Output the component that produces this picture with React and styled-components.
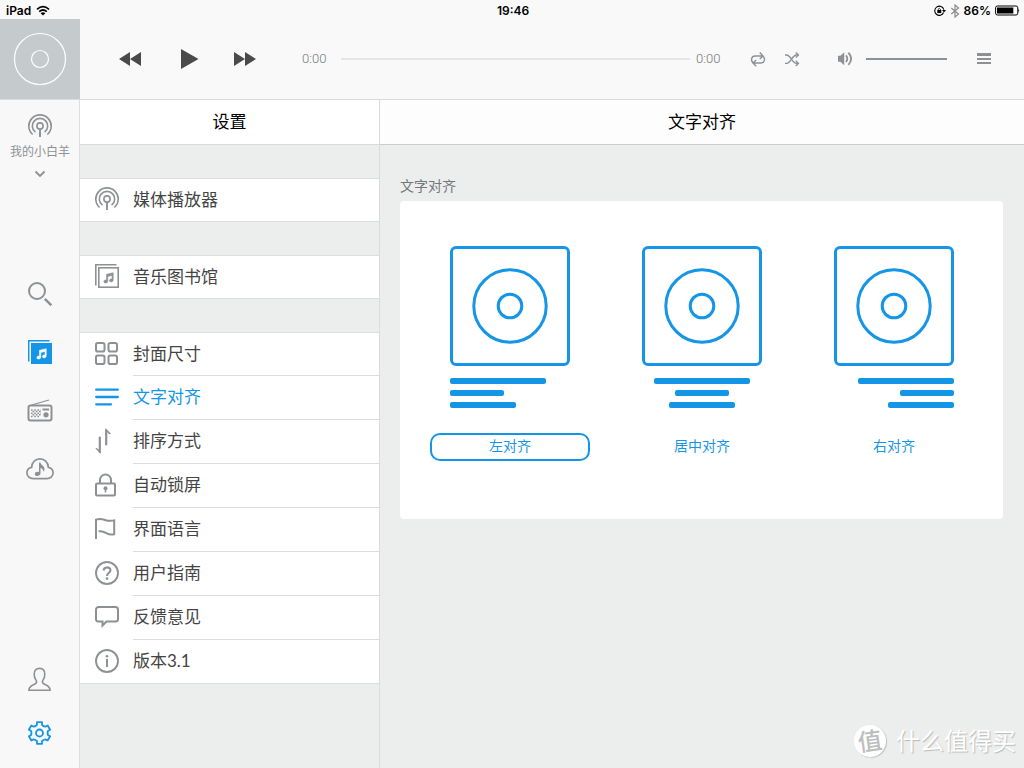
import React, { useState } from "react";
import styled, { createGlobalStyle, css } from "styled-components";

const BLUE = "#1495e5";
const GREY = "#8e9194";

const GlobalStyle = createGlobalStyle`
  *, *::before, *::after { box-sizing: border-box; }
  body {
    margin: 0;
    font-family: Lato, "Noto Sans CJK SC", sans-serif;
    background: #eceeee;
    color: #444;
  }
  button, input { font: inherit; color: inherit; }
  h1, h2, ul { margin: 0; padding: 0; font-weight: 400; }
  svg { display: block; flex: none; }
`;

const Page = styled.div`
  min-height: 100vh;
  display: flex;
  flex-direction: column;
  position: relative;
`;

const StatusBar = styled.div`
  display: grid;
  grid-template-columns: 1fr auto 1fr;
  align-items: center;
  height: 19px;
  padding: 2px 4px 0 6px;
  background: #f9f9f9;
  color: #000;
  font-family: Inter, sans-serif;
  font-size: 12px;
  font-weight: 600;
  line-height: 16px;
`;

const StatusGroup = styled.div`
  display: flex;
  align-items: center;
  gap: ${(p) => (p.$end ? 4 : 5)}px;
  justify-content: ${(p) => (p.$end ? "flex-end" : "flex-start")};
`;

const PlayerBar = styled.header`
  display: flex;
  align-items: center;
  height: 81px;
  padding-right: 32px;
  background: #f9f9f9;
  border-bottom: 1px solid #d9dbdc;
`;

const Cover = styled.div`
  width: 80px;
  height: 80px;
  flex: none;
  background: #c5cacd;
  color: #fff;
`;

const IconButton = styled.button`
  display: flex;
  align-items: center;
  justify-content: center;
  padding: 0;
  border: 0;
  background: none;
  cursor: pointer;
  color: ${GREY};
`;

const Transport = styled.div`
  display: flex;
  gap: 34px;
  padding-left: 38px;
  ${IconButton} { color: #4a4a4a; }
`;

const Progress = styled.div`
  flex: 1;
  display: flex;
  align-items: center;
  margin-left: 44px;
  min-width: 0;
`;

const Time = styled.span`
  width: 26px;
  font-family: Roboto, sans-serif;
  font-size: 13px;
  font-weight: 300;
  line-height: 16px;
  color: #77797b;
`;

const Slider = styled.input`
  appearance: none;
  height: 2px;
  margin: 0;
  padding: 0;
  min-width: 0;
  background: ${(p) => p.$color};
  ${(p) => (p.$wide ? css`flex: 1; margin: 0 6px 0 13px;` : css`width: 81px;`)}
  &::-webkit-slider-thumb { appearance: none; width: 0; height: 0; }
`;

const Modes = styled.div`
  display: flex;
  gap: 18px;
  margin: 0 36px 0 28px;
`;

const Volume = styled.label`
  display: flex;
  align-items: center;
  gap: 14px;
  margin-right: 29px;
`;

const Body = styled.div`
  flex: 1;
  display: flex;
`;

const Sidebar = styled.nav`
  width: 80px;
  flex: none;
  display: flex;
  flex-direction: column;
  padding-bottom: 8px;
  background: #f8f8f8;
  border-right: 1px solid #dcdedf;
`;

const HostButton = styled(IconButton)`
  flex-direction: column;
  margin: 14px 0 87px;
  padding-left: 1px;
  font-size: 12px;
  line-height: 18px;
  white-space: nowrap;
`;

const HostName = styled.span`
  margin: 5px 0 9px;
`;

const SideButton = styled(IconButton)`
  height: ${(p) => (p.$compact ? 54 : 58)}px;
  padding-left: 1px;
  color: ${(p) => (p.$active ? BLUE : GREY)};
`;

const SideFooter = styled.div`
  display: flex;
  flex-direction: column;
  margin-top: auto;
`;

const SettingsPanel = styled.section`
  width: 300px;
  flex: none;
  border-right: 1px solid #d9dbdc;
`;

const TitleBar = styled.header`
  height: 45px;
  display: flex;
  align-items: center;
  justify-content: center;
  background: ${(p) => p.$background};
  border-bottom: 1px solid ${(p) => p.$line};
  color: #000;
`;

const Title = styled.h1`
  font-size: 17px;
  line-height: 24px;
`;

const Group = styled.ul`
  margin-top: 33px;
  list-style: none;
  background: #fff;
  border-top: 1px solid #dcdede;
`;

const RowIcon = styled.span`
  padding-bottom: 2px;
`;

const RowLabel = styled.span`
  flex: 1;
  align-self: stretch;
  display: flex;
  align-items: center;
  padding-bottom: 1px;
  border-bottom: 1px solid #dcdede;
`;

const Row = styled.button`
  display: flex;
  align-items: center;
  gap: 14px;
  width: 100%;
  height: 44px;
  padding: 0 0 0 15px;
  border: 0;
  background: none;
  text-align: left;
  cursor: pointer;
  font-size: 17px;
  line-height: 24px;
  color: ${(p) => (p.$active ? BLUE : "#444")};
  svg { color: ${(p) => (p.$active ? BLUE : GREY)}; }
  li:first-child > & { height: 43px; }
  li:last-child > & { border-bottom: 1px solid #dcdede; }
  li:last-child > & ${RowLabel} { border-bottom: 0; }
`;

const Detail = styled.main`
  flex: 1;
  min-width: 0;
`;

const Section = styled.section`
  padding: 31px 21px 20px 20px;
`;

const SectionTitle = styled.h2`
  margin-bottom: 5px;
  font-size: 14px;
  line-height: 20px;
  color: #747678;
`;

const Card = styled.div`
  display: flex;
  justify-content: space-between;
  padding: 45px 29px 58px 30px;
  background: #fff;
  border-radius: 4px;
`;

const Option = styled.label`
  width: 160px;
  display: flex;
  flex-direction: column;
  align-items: center;
  cursor: pointer;
  color: ${BLUE};
`;

const HiddenRadio = styled.input`
  appearance: none;
  width: 0;
  height: 0;
  margin: 0;
`;

const AlbumBox = styled.div`
  width: 120px;
  height: 120px;
  display: flex;
  align-items: center;
  justify-content: center;
  border: 3px solid ${BLUE};
  border-radius: 6px;
`;

const Bars = styled.div`
  width: 120px;
  display: flex;
  flex-direction: column;
  gap: 6px;
  margin: 12px 0 25px;
  align-items: ${(p) => p.$align};
`;

const Bar = styled.div`
  width: ${(p) => p.$width}px;
  height: 6px;
  border-radius: 2px;
  background: ${BLUE};
`;

const Pill = styled.span`
  width: 100%;
  height: 28px;
  padding-bottom: 2px;
  border: 2px solid ${(p) => (p.$checked ? BLUE : "transparent")};
  border-radius: 10px;
  font-size: 14px;
  line-height: 22px;
  text-align: center;
`;

const Watermark = styled.div`
  position: absolute;
  right: 8px;
  bottom: 10px;
  display: flex;
  align-items: center;
  gap: 10px;
  font-size: 24px;
  line-height: 34px;
  color: #fff;
  text-shadow: 1px 1px 1px #b9bbbb;
`;

const Seal = styled.span`
  width: 32px;
  height: 32px;
  border-radius: 50%;
  background: #fff;
  box-shadow: 1px 1px 1px #c3c5c5;
  color: #bcbebe;
  font-weight: 500;
  line-height: 31px;
  text-align: center;
  text-shadow: none;
  transform: rotate(-8deg);
`;

function Icon({ w = 24, h = 24, sw = 2, children, ...rest }) {
  return (
    <svg width={w} height={h} viewBox={`0 0 ${w} ${h}`} fill="none" stroke="currentColor"
      strokeWidth={sw} aria-hidden="true" {...rest}>
      {children}
    </svg>
  );
}

const Broadcast = () => (
  <Icon sw={1.6}>
    <path d="M4.6 20.5A11.2 11.2 0 1 1 19.4 20.5" />
    <path d="M7.4 18.2A7.7 7.7 0 1 1 16.6 18.2" />
    <circle cx="12" cy="12" r="3.1" />
    <path d="M12 15v8" strokeWidth="1.9" />
  </Icon>
);

const NOTE = "M10.3 8.6L18 6.8V15.2C18 17.8 13.6 18 13.6 15.7C13.6 14.2 15.2 13.6 16.6 14V10L11.8 11.1V16.5C11.8 19.1 7.3 19.3 7.3 17C7.3 15.4 9 14.9 10.3 15.3Z";

const Library = () => (
  <Icon sw={1.6}>
    <path d="M.8 21.5V.8H21.5" />
    <rect x="3.8" y="3.8" width="19.4" height="19.4" />
    <path d={NOTE} fill="currentColor" strokeWidth=".6" transform="translate(2.4 2.7) scale(.88)" />
  </Icon>
);

const LibraryFilled = () => (
  <Icon sw={1.5}>
    <path d="M.7 21.5V.8H21.5" />
    <path d="M3 3h21v21H3z" fill="currentColor" stroke="none" />
    <path d={NOTE} fill="#fff" stroke="#fff" strokeWidth=".6" transform="translate(2.4 2.7) scale(.88)" />
  </Icon>
);

const Covers = () => (
  <Icon>
    <rect x="1" y="1" width="8.5" height="8.5" rx="1.8" />
    <rect x="13.5" y="1" width="8.5" height="8.5" rx="1.8" />
    <rect x="1" y="13.5" width="8.5" height="8.5" rx="1.8" />
    <rect x="13.5" y="13.5" width="8.5" height="8.5" rx="1.8" />
  </Icon>
);

const Lines = () => (
  <Icon sw={2.3} strokeLinecap="round">
    <path d="M1.2 4.7H22.8M1.2 12H22.8M1.2 19.3H16" />
  </Icon>
);

const Sort = () => (
  <Icon h={26} strokeLinecap="round" sw={2.2}>
    <path d="M4.8 9.5V24" />
    <path d="M5.9 26L.4 20.6Q1.2 19.4 2.4 20.4L4.8 22.4Z" fill="currentColor" stroke="none" />
    <path d="M11.2 16.5V2" />
    <path d="M10.1 0L15.9 5.4Q15.2 6.8 13.8 5.8L11.2 3.6Z" fill="currentColor" stroke="none" />
  </Icon>
);

const Lock = () => (
  <Icon>
    <rect x="1" y="10.5" width="19" height="12" rx="1" />
    <path d="M5 10.5V7a5.5 5.5 0 0 1 11 0V10.5" />
    <circle cx="10.5" cy="15.2" r="2" fill="currentColor" stroke="none" />
    <path d="M10.5 15V19.5" strokeWidth="1.6" />
  </Icon>
);

const Flag = () => (
  <Icon sw={2}>
    <path d="M1 22V2.6C9.4.2 10.4 5.6 19.2 3.4V17.2C11.6 19.6 10.6 12.6 3.5 14.4" />
  </Icon>
);

const Help = () => (
  <Icon sw={1.9}>
    <circle cx="12" cy="12" r="11" />
    <path d="M8.7 9.5C8.7 5.4 15.5 5.5 15.5 9.2C15.5 11.8 12 11.8 12 15" strokeWidth="2.1" />
    <circle cx="12" cy="17.6" r="1.3" fill="currentColor" stroke="none" />
  </Icon>
);

const Feedback = () => (
  <Icon sw={2} strokeLinejoin="miter">
    <path d="M3.5 2H20.5A2.5 2.5 0 0 1 23 4.5V14A2.5 2.5 0 0 1 20.5 16.5H11.5L7.5 20.5V16.5H3.5A2.5 2.5 0 0 1 1 14V4.5A2.5 2.5 0 0 1 3.5 2Z" />
  </Icon>
);

const Info = () => (
  <Icon sw={1.9}>
    <circle cx="12" cy="12" r="11" />
    <circle cx="12" cy="7.3" r="1.3" fill="currentColor" stroke="none" />
    <path d="M12 10V18" strokeWidth="2" />
  </Icon>
);

const Search = () => (
  <Icon>
    <circle cx="9" cy="9" r="8" />
    <path d="M16.8 16.8L23.3 23.3" strokeWidth="2.4" />
  </Icon>
);

const Radio = () => (
  <Icon w={26}>
    <rect x="1.5" y="7.5" width="23" height="15" rx="2" />
    <path d="M4.5 7L22 2" strokeWidth="1.3" />
    <path d="M4 12H14M4 15.2H14M4 18.4H12" strokeWidth="1.5" strokeDasharray="1.6 1.6" />
    <path d="M5.6 13.6H14M5.6 16.8H14" strokeWidth="1.5" strokeDasharray="1.6 1.6" />
    <path d="M15.5 11.5H22" />
    <circle cx="19" cy="16.8" r="2.6" fill="currentColor" stroke="none" />
  </Icon>
);

const Cloud = () => (
  <Icon w={28} sw={1.7}>
    <path d="M7 22.6C3.6 22.6 .9 20 .9 17C.9 14 3.1 11.9 5.6 11.4C5.6 6.5 9.2 2.9 14 2.9C18.8 2.9 22.2 6.5 22.4 11.4C25 11.9 27.1 14 27.1 17C27.1 20 24.5 22.6 21 22.6Z" />
    <path d="M13 6.5H14.5C14.5 9 18.5 10 18.5 13C18.5 14.3 17.9 15.3 17.4 15.8C17.3 13.7 16.3 12.6 14.5 12V17.3C14.5 20.7 8.8 21 8.8 18C8.8 15.9 11.3 15.3 13 16Z" fill="currentColor" stroke="none" />
  </Icon>
);

const User = () => (
  <Icon sw={1.6}>
    <path d="M.9 23.2C.9 19.3 4 18.5 6.5 17.2C8.6 16.1 9.2 14.8 8 13.1C6.6 11.1 6.2 9.5 6.2 7.2C6.2 3.5 8.3 1.4 11.5 1.4C14.7 1.4 16.8 3.5 16.8 7.2C16.8 9.5 16.4 11.1 15 13.1C13.8 14.8 14.4 16.1 16.5 17.2C19 18.5 22.1 19.3 22.1 23.2Z" />
  </Icon>
);

const polar = (radius, degrees) => {
  const a = (degrees * Math.PI) / 180;
  return `${(11.5 + radius * Math.cos(a)).toFixed(2)} ${(12 + radius * Math.sin(a)).toFixed(2)}`;
};

const GEAR = `M${[0, 60, 120, 180, 240, 300]
  .map((t) => t - 90)
  .map((t) => `${polar(8.6, t - 17)}L${polar(11.1, t - 13)}L${polar(11.1, t + 13)}L${polar(8.6, t + 17)}Q${polar(7.8, t + 30)} ${polar(8.6, t + 43)}`)
  .join("L")}Z`;

const Gear = () => (
  <Icon sw={1.8} strokeLinejoin="round">
    <path d={GEAR} />
    <circle cx="11.5" cy="12" r="3.5" />
  </Icon>
);

const Disc = ({ size, outer, inner, sw }) => (
  <Icon w={size} h={size} sw={sw}>
    <circle cx={size / 2} cy={size / 2} r={outer} />
    <circle cx={size / 2} cy={size / 2} r={inner} />
  </Icon>
);

const Previous = () => (
  <Icon stroke="none" fill="currentColor"><path d="M12 5V19L1 12ZM23 5V19L12 12Z" /></Icon>
);
const Play = () => (
  <Icon stroke="none" fill="currentColor"><path d="M5 2L22.5 12L5 22Z" /></Icon>
);
const Next = () => (
  <Icon stroke="none" fill="currentColor"><path d="M0 5V19L11 12ZM11 5V19L22 12Z" /></Icon>
);

const Repeat = () => (
  <Icon w={16} h={16} sw={1.4}>
    <path d="M3 11.6C.6 10 1.2 5 5 5H12.6M9.8 1.6L13 5L9.8 8" />
    <path d="M13 5.4C15.4 7 14.8 12 11 12H3.4M6.2 9L3 12L6.2 15.2" />
  </Icon>
);

const Shuffle = () => (
  <Icon w={16} h={16} sw={1.4}>
    <path d="M1 4H2.5C7 4 8 12.4 12.5 12.4H14.3M1 12.4H2.5C7 12.4 8 4 12.5 4H14.3" />
    <path d="M11.8 1.4L14.4 4L11.8 6.6M11.8 9.8L14.4 12.4L11.8 15" />
  </Icon>
);

const Speaker = () => (
  <Icon w={16} h={16} sw={1.8}>
    <path d="M2 4.7H4.4L8.2 1.3V14.3L4.4 10.7H2Z" fill="currentColor" stroke="none" />
    <path d="M10 4.4Q12.6 7.7 10 11M12.4 1.6Q17.8 7.7 12.4 13.8" />
  </Icon>
);

const Queue = () => (
  <Icon w={16} h={16} stroke="none" fill="currentColor">
    <path d="M1 2H15V5H1ZM1 7H15V9H1ZM1 11H15V13H1Z" />
  </Icon>
);

const Wifi = () => (
  <Icon w={14} h={12} sw={1.7}>
    <path d="M1 4.3Q7-1 13 4.3M3.2 6.7Q7 3.3 10.8 6.7" />
    <path d="M4.6 8.2Q7 6.4 9.4 8.2L7 10.6Z" fill="currentColor" stroke="none" />
  </Icon>
);

const RotationLock = () => (
  <Icon w={12} h={12} sw={1.1}>
    <path d="M9.6 7.5A4.6 4.6 0 1 1 9.8 4.6" />
    <path d="M8 5H12L10 7.6Z" fill="currentColor" stroke="none" />
    <path d="M3.3 5H7.3V8.1H3.3Z" fill="currentColor" stroke="none" />
    <path d="M4.2 5.2V4.2Q5.3 2.3 6.4 4.2V5.2" strokeWidth=".8" />
  </Icon>
);

const Bluetooth = () => (
  <Icon w={10} h={14} sw={1.2} stroke="#8a8a8a">
    <path d="M1.3 4L8.5 10L5 13V1L8.5 4L1.3 10" />
  </Icon>
);

const Battery = () => (
  <Icon w={25} h={12} sw={1}>
    <rect x=".6" y="1" width="22.2" height="9" rx="1.8" />
    <path d="M2 2.4H18.3V8.6H2ZM23.4 4Q25 5.5 23.4 7.2Z" fill="currentColor" stroke="none" />
  </Icon>
);

const GROUPS = [
  [["媒体播放器", Broadcast]],
  [["音乐图书馆", Library]],
  [
    ["封面尺寸", Covers],
    ["文字对齐", Lines],
    ["排序方式", Sort],
    ["自动锁屏", Lock],
    ["界面语言", Flag],
    ["用户指南", Help],
    ["反馈意见", Feedback],
    ["版本3.1", Info],
  ],
];

const OPTIONS = [
  ["左对齐", "flex-start"],
  ["居中对齐", "center"],
  ["右对齐", "flex-end"],
];

export default function App() {
  const [alignment, setAlignment] = useState("flex-start");
  const [item, setItem] = useState("文字对齐");

  return (
    <Page>
      <GlobalStyle />
      <StatusBar>
        <StatusGroup>iPad <Wifi /></StatusGroup>
        <span>19:46</span>
        <StatusGroup $end><RotationLock /><Bluetooth /><span>86%</span><Battery /></StatusGroup>
      </StatusBar>

      <PlayerBar>
        <Cover><Disc size={80} outer={25.5} inner={8.5} sw={1.2} /></Cover>
        <Transport>
          <IconButton aria-label="上一首"><Previous /></IconButton>
          <IconButton aria-label="播放"><Play /></IconButton>
          <IconButton aria-label="下一首"><Next /></IconButton>
        </Transport>
        <Progress>
          <Time>0:00</Time>
          <Slider type="range" defaultValue="0" aria-label="进度" $wide $color="#e4e5e5" />
          <Time>0:00</Time>
        </Progress>
        <Modes>
          <IconButton aria-label="循环"><Repeat /></IconButton>
          <IconButton aria-label="随机"><Shuffle /></IconButton>
        </Modes>
        <Volume>
          <IconButton as="span"><Speaker /></IconButton>
          <Slider type="range" defaultValue="100" aria-label="音量" $color={GREY} />
        </Volume>
        <IconButton aria-label="播放列表"><Queue /></IconButton>
      </PlayerBar>

      <Body>
        <Sidebar>
          <HostButton>
            <Broadcast />
            <HostName>我的小白羊</HostName>
            <Icon w={12} h={8} sw={1.8}><path d="M1.5 1.5L6 6L10.5 1.5" /></Icon>
          </HostButton>
          <SideButton aria-label="搜索"><Search /></SideButton>
          <SideButton aria-label="图书馆" $active><LibraryFilled /></SideButton>
          <SideButton aria-label="电台"><Radio /></SideButton>
          <SideButton aria-label="云音乐"><Cloud /></SideButton>
          <SideFooter>
            <SideButton aria-label="用户" $compact><User /></SideButton>
            <SideButton aria-label="设置" $compact $active><Gear /></SideButton>
          </SideFooter>
        </Sidebar>

        <SettingsPanel>
          <TitleBar $background="#fff" $line="#d9dbdc"><Title>设置</Title></TitleBar>
          {GROUPS.map((rows) => (
            <Group key={rows[0][0]}>
              {rows.map(([label, Glyph]) => (
                <li key={label}>
                  <Row $active={item === label} onClick={() => setItem(label)}>
                    <RowIcon><Glyph /></RowIcon>
                    <RowLabel>{label}</RowLabel>
                  </Row>
                </li>
              ))}
            </Group>
          ))}
        </SettingsPanel>

        <Detail>
          <TitleBar $background="#fdfdfd" $line="#c9cccd"><Title>文字对齐</Title></TitleBar>
          <Section>
            <SectionTitle>文字对齐</SectionTitle>
            <Card>
              {OPTIONS.map(([label, align]) => (
                <Option key={align}>
                  <HiddenRadio type="radio" name="alignment" value={align}
                    checked={alignment === align} onChange={() => setAlignment(align)} />
                  <AlbumBox><Disc size={90} outer={36.2} inner={11.8} sw={3} /></AlbumBox>
                  <Bars $align={align}>
                    <Bar $width={96} />
                    <Bar $width={54} />
                    <Bar $width={66} />
                  </Bars>
                  <Pill $checked={alignment === align}>{label}</Pill>
                </Option>
              ))}
            </Card>
          </Section>
        </Detail>
      </Body>

      <Watermark><Seal>值</Seal>什么值得买</Watermark>
    </Page>
  );
}
